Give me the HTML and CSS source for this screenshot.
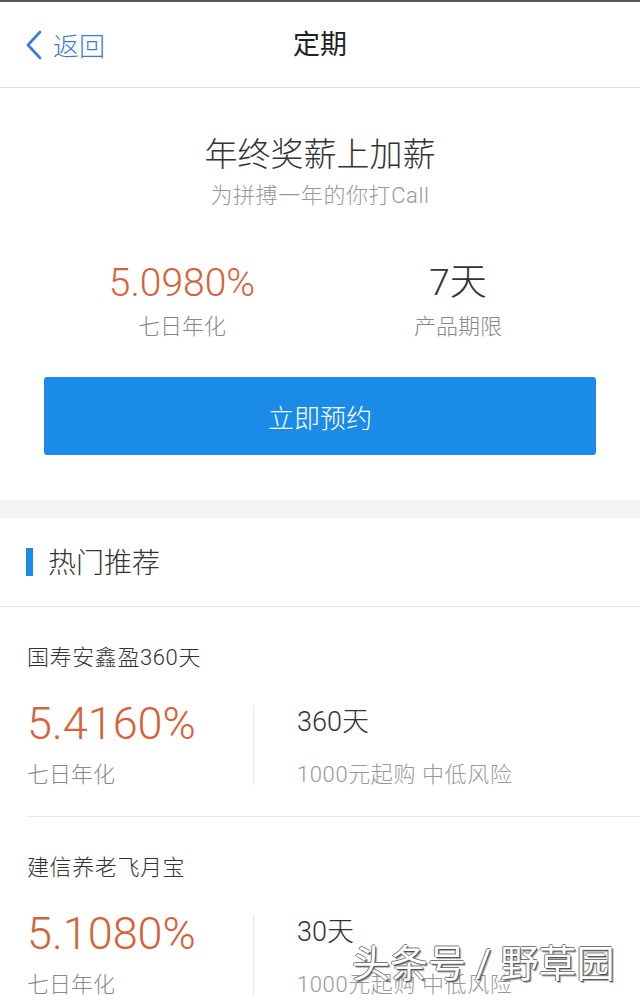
FILE: index.html
```html
<!DOCTYPE html>
<html lang="zh-CN">
<head>
<meta charset="utf-8">
<title>定期</title>
<link rel="stylesheet" href="styles.css">
</head>
<body>
<div class="page">
  <header class="nav">
    <a class="back">
      <svg class="chev" width="18" height="30" viewBox="0 0 18 30"><path d="M15 2 L3 15 L15 28" fill="none" stroke="#3a7bd8" stroke-width="2.6" stroke-linecap="round" stroke-linejoin="round"/></svg>
      <span>返回</span>
    </a>
    <h1 class="nav-title">定期</h1>
  </header>

  <section class="hero">
    <h2 class="hero-title">年终奖薪上加薪</h2>
    <p class="hero-sub">为拼搏一年的你打Call</p>
    <div class="stats">
      <div class="stat">
        <div class="stat-val rate">5.0980%</div>
        <div class="stat-lbl">七日年化</div>
      </div>
      <div class="stat">
        <div class="stat-val">7天</div>
        <div class="stat-lbl">产品期限</div>
      </div>
    </div>
    <button class="cta">立即预约</button>
  </section>

  <div class="gap"></div>

  <section class="rec">
    <div class="rec-head"><span class="bar"></span><span class="rec-title">热门推荐</span></div>
    <div class="item">
      <div class="item-name">国寿安鑫盈360天</div>
      <div class="item-row">
        <div class="item-left">
          <div class="item-rate">5.4160%</div>
          <div class="item-lbl">七日年化</div>
        </div>
        <div class="divider"></div>
        <div class="item-right">
          <div class="item-days">360天</div>
          <div class="item-info">1000元起购 中低风险</div>
        </div>
      </div>
    </div>
    <div class="item">
      <div class="item-name">建信养老飞月宝</div>
      <div class="item-row">
        <div class="item-left">
          <div class="item-rate">5.1080%</div>
          <div class="item-lbl">七日年化</div>
        </div>
        <div class="divider"></div>
        <div class="item-right">
          <div class="item-days">30天</div>
          <div class="item-info">1000元起购 中低风险</div>
        </div>
      </div>
    </div>
  </section>

  <div class="watermark">头条号 / 野草园</div>
</div>
</body>
</html>
```

FILE: styles.css
```css
* { box-sizing: border-box; }
html, body { margin: 0; padding: 0; background: #fff; }
body {
  font-family: "Roboto", "Noto Sans CJK SC", sans-serif;
  font-weight: 300;
  color: #333;
}
.page { position: relative; width: 640px; height: 1000px; overflow: hidden; }

.nav {
  position: relative;
  height: 88px;
  border-top: 2px solid #555;
  border-bottom: 1px solid #dedede;
  display: flex;
  align-items: center;
  justify-content: center;
}
.back {
  position: absolute;
  left: 25px;
  top: 24px;
  display: flex;
  align-items: center;
  gap: 10px;
  color: #3a7bd8;
  font-size: 26px;
}
.chev { display: block; }
.nav-title {
  margin: 0 0 4px;
  font-size: 27px;
  font-weight: 400;
  color: #222;
}

.hero {
  padding: 47px 44px 45px;
  text-align: center;
}
.hero-title {
  margin: 0;
  font-size: 33px;
  line-height: 40px;
  font-weight: 300;
  color: #333;
}
.hero-sub {
  margin: 7px 0 0;
  font-size: 22px;
  line-height: 28px;
  letter-spacing: 0.6px;
  color: #999;
}
.stats {
  display: flex;
  margin-top: 51px;
}
.stat { flex: 1; }
.stat-val {
  font-size: 37px;
  line-height: 44px;
  color: #333;
}
.stat-val.rate { font-size: 39px; color: #d6623a; }
.stat-lbl {
  margin-top: 8px;
  font-size: 22px;
  line-height: 28px;
  color: #888;
}
.cta {
  display: block;
  width: 100%;
  height: 78px;
  margin-top: 36px;
  border: none;
  border-radius: 3px;
  background: #1a8ce8;
  color: #fff;
  font-family: inherit;
  font-weight: 300;
  font-size: 26px;
  padding: 0;
}

.gap { height: 18px; background: #f3f3f6; }

.rec-head {
  height: 89px;
  border-bottom: 1px solid #e4e4e4;
  display: flex;
  align-items: center;
  padding-left: 26px;
}
.bar {
  width: 7px;
  height: 28px;
  background: #1a8ce8;
  margin-right: 15px;
}
.rec-title {
  font-size: 28px;
  color: #333;
  margin-top: -3px;
}

.item {
  margin-left: 27px;
  padding: 37px 0 27px;
  border-bottom: 1px solid #e6e6e6;
}
.item-name {
  font-size: 22px;
  line-height: 28px;
  letter-spacing: 0.6px;
  color: #333;
}
.item-row {
  display: flex;
  margin-top: 28px;
}
.item-left { width: 226px; }
.item-rate {
  font-size: 45px;
  line-height: 48px;
  color: #d6623a;
}
.item-lbl {
  margin-top: 13px;
  font-size: 22px;
  line-height: 28px;
  color: #888;
}
.divider {
  width: 1px;
  background: #e8e8e8;
  margin: 5px 0 4px;
}
.item-right { padding-left: 43px; }
.item-days {
  font-size: 27px;
  line-height: 44px;
  color: #333;
}
.item-info {
  margin-top: 17px;
  font-size: 22px;
  line-height: 28px;
  letter-spacing: 0.6px;
  color: #999;
}

.watermark {
  position: absolute;
  left: 352px;
  top: 940px;
  font-size: 38px;
  line-height: 48px;
  font-weight: 400;
  color: #fff;
  text-shadow: 1px 1px 0 #555, -1px 0 0 #777, 0 -1px 0 #777, 2px 2px 1px rgba(0,0,0,0.35);
  white-space: nowrap;
}
```
